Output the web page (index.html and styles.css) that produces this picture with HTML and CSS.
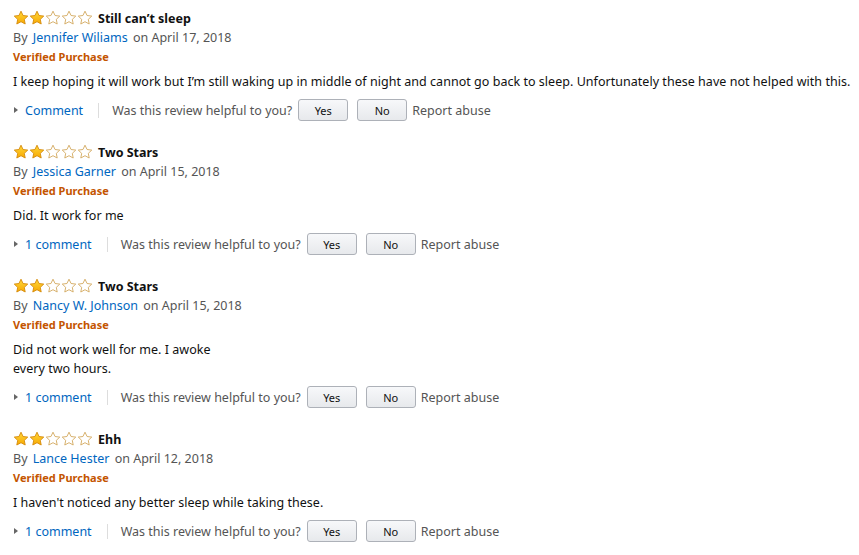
FILE: index.html
```html
<!DOCTYPE html>
<html lang="en">
<head>
    <meta charset="UTF-8">
    <title>Customer reviews</title>
    <link rel="stylesheet" href="styles.css">
</head>
<body>
    <svg width="0" height="0" class="defs">
        <defs>
            <linearGradient id="gold" x1="0" y1="0" x2="0" y2="1">
                <stop offset="0" stop-color="#ffd83b"/>
                <stop offset="1" stop-color="#f7a800"/>
            </linearGradient>
            <symbol id="star-full" viewBox="0 0 16 16">
                <path d="M8 1.2l2.05 4.3 4.7.6-3.45 3.25.9 4.65L8 11.7l-4.2 2.3.9-4.65L1.25 6.1l4.7-.6z" fill="url(#gold)" stroke="#d58a0b" stroke-width="0.9" stroke-linejoin="round"/>
            </symbol>
            <symbol id="star-empty" viewBox="0 0 16 16">
                <path d="M8 1.2l2.05 4.3 4.7.6-3.45 3.25.9 4.65L8 11.7l-4.2 2.3.9-4.65L1.25 6.1l4.7-.6z" fill="#fff" stroke="#d2a85e" stroke-width="0.9" stroke-linejoin="round"/>
            </symbol>
        </defs>
    </svg>

    <div class="review">
        <div class="title-row">
            <span class="stars">
                <svg><use href="#star-full"/></svg><svg><use href="#star-full"/></svg><svg><use href="#star-empty"/></svg><svg><use href="#star-empty"/></svg><svg><use href="#star-empty"/></svg>
            </span>
            <span class="title">Still can’t sleep</span>
        </div>
        <div class="byline">By <a class="author">Jennifer Wiliams</a> on April 17, 2018</div>
        <div class="verified">Verified Purchase</div>
        <p class="body">I keep hoping it will work but I’m still waking up in middle of night and cannot go back to sleep. Unfortunately these have not helped with this.</p>
        <div class="actions">
            <a class="comment"><span class="arrow"></span>Comment</a>
            <span class="sep"></span>
            <span class="helpful">Was this review helpful to you?</span>
            <button class="btn">Yes</button>
            <button class="btn">No</button>
            <span class="report">Report abuse</span>
        </div>
    </div>

    <div class="review">
        <div class="title-row">
            <span class="stars">
                <svg><use href="#star-full"/></svg><svg><use href="#star-full"/></svg><svg><use href="#star-empty"/></svg><svg><use href="#star-empty"/></svg><svg><use href="#star-empty"/></svg>
            </span>
            <span class="title">Two Stars</span>
        </div>
        <div class="byline">By <a class="author">Jessica Garner</a> on April 15, 2018</div>
        <div class="verified">Verified Purchase</div>
        <p class="body">Did. It work for me</p>
        <div class="actions">
            <a class="comment"><span class="arrow"></span>1 comment</a>
            <span class="sep"></span>
            <span class="helpful">Was this review helpful to you?</span>
            <button class="btn">Yes</button>
            <button class="btn">No</button>
            <span class="report">Report abuse</span>
        </div>
    </div>

    <div class="review">
        <div class="title-row">
            <span class="stars">
                <svg><use href="#star-full"/></svg><svg><use href="#star-full"/></svg><svg><use href="#star-empty"/></svg><svg><use href="#star-empty"/></svg><svg><use href="#star-empty"/></svg>
            </span>
            <span class="title">Two Stars</span>
        </div>
        <div class="byline">By <a class="author">Nancy W. Johnson</a> on April 15, 2018</div>
        <div class="verified">Verified Purchase</div>
        <p class="body">Did not work well for me. I awoke<br>every two hours.</p>
        <div class="actions">
            <a class="comment"><span class="arrow"></span>1 comment</a>
            <span class="sep"></span>
            <span class="helpful">Was this review helpful to you?</span>
            <button class="btn">Yes</button>
            <button class="btn">No</button>
            <span class="report">Report abuse</span>
        </div>
    </div>

    <div class="review">
        <div class="title-row">
            <span class="stars">
                <svg><use href="#star-full"/></svg><svg><use href="#star-full"/></svg><svg><use href="#star-empty"/></svg><svg><use href="#star-empty"/></svg><svg><use href="#star-empty"/></svg>
            </span>
            <span class="title">Ehh</span>
        </div>
        <div class="byline">By <a class="author">Lance Hester</a> on April 12, 2018</div>
        <div class="verified">Verified Purchase</div>
        <p class="body">I haven't noticed any better sleep while taking these.</p>
        <div class="actions">
            <a class="comment"><span class="arrow"></span>1 comment</a>
            <span class="sep"></span>
            <span class="helpful">Was this review helpful to you?</span>
            <button class="btn">Yes</button>
            <button class="btn">No</button>
            <span class="report">Report abuse</span>
        </div>
    </div>
</body>
</html>
```

FILE: styles.css
```css
body {
    margin: 0;
    padding: 9px 0 0 13px;
    background: #fff;
    font-family: "Noto Sans", "Open Sans", Arial, sans-serif;
    font-size: 12.5px;
    color: #111;
}
.defs {
    position: absolute;
}
.review {
    margin-bottom: 22px;
}
.title-row {
    display: flex;
    align-items: center;
    height: 18px;
}
.stars {
    display: flex;
    width: 85px;
}
.stars svg {
    width: 16px;
    height: 16px;
}
.title {
    font-weight: bold;
    font-size: 12.5px;
}
.byline {
    margin-top: 1px;
    line-height: 19px;
    color: #555;
}
.author {
    color: #0066c0;
    margin: 0 2px;
}
.verified {
    line-height: 19px;
    font-size: 11px;
    font-weight: bold;
    color: #c45500;
}
.body {
    margin: 6px 0 0;
    line-height: 19px;
    letter-spacing: 0.03px;
}
.actions {
    display: flex;
    align-items: center;
    margin-top: 8px;
    height: 22px;
    color: #555;
}
.comment {
    color: #0066c0;
    display: flex;
    align-items: center;
}
.arrow {
    width: 0;
    height: 0;
    border-top: 3.5px solid transparent;
    border-bottom: 3.5px solid transparent;
    border-left: 4px solid #666;
    margin: 0 7px 0 1px;
}
.sep {
    width: 1px;
    height: 15px;
    background: #ddd;
    margin: 0 13px 0 15px;
}
.helpful {
    margin-right: 6px;
}
.btn {
    width: 50px;
    height: 22px;
    margin-right: 9px;
    padding: 0;
    font-family: inherit;
    font-size: 11px;
    color: #111;
    border: 1px solid #adb1b8;
    border-radius: 3px;
    background: linear-gradient(#f7f8fa, #e7e9ec);
}
.btn + .btn {
    margin-right: 5px;
}
```
